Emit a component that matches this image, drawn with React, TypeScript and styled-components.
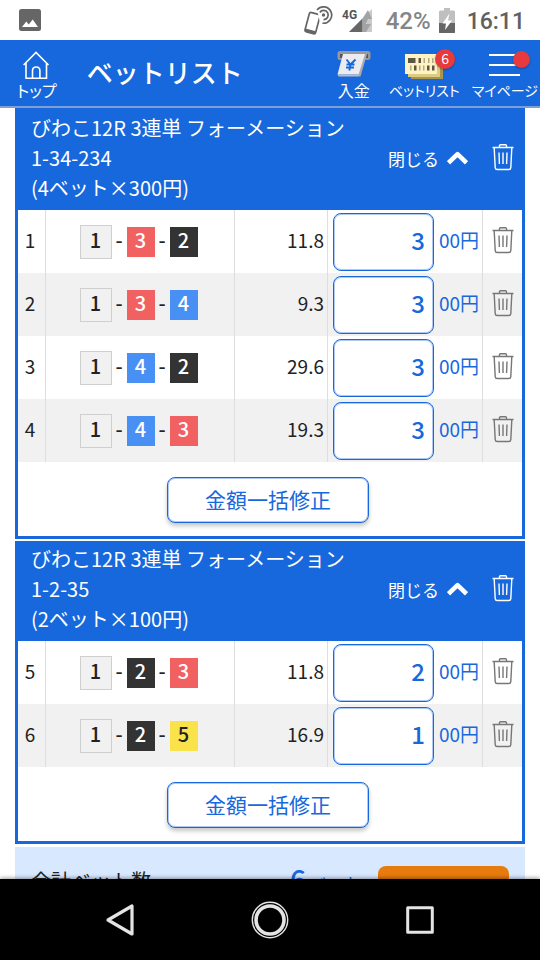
import React from "react";
import styled, { createGlobalStyle } from "styled-components";

const BLUE = "#1768dc";

const GlobalStyle = createGlobalStyle`
  * { box-sizing: border-box; }
  body {
    margin: 0;
    background: #fff;
    color: #222;
    font-family: "Noto Sans CJK JP", "Noto Sans", sans-serif;
    font-size: 20px;
  }
  button, input { font: inherit; color: inherit; margin: 0; }
  button { background: none; border: 0; padding: 0; cursor: pointer; }
  svg { display: block; }
`;

const Screen = styled.div`
  height: 100vh;
  display: flex;
  flex-direction: column;
  overflow: hidden;
`;

const StatusBar = styled.div`
  flex: none;
  height: 40px;
  padding: 0 15px 0 19px;
  display: flex;
  align-items: center;
  font-family: Roboto, sans-serif;
  font-size: 24px;
  font-weight: 500;
`;

const StatusGroup = styled.div`
  margin-left: auto;
  display: flex;
  align-items: center;
  gap: 8px;
`;

const Battery = styled.span`
  margin: 2px 0 0 4px;
  color: #858585;
`;

const Clock = styled.span`
  margin: 2px 0 0 4px;
  color: #606060;
  font-size: 23px;
`;

const Header = styled.header`
  flex: none;
  height: 68px;
  padding: 10px 2px 0 17px;
  display: flex;
  align-items: flex-start;
  background: ${BLUE};
  color: #fff;
  border-bottom: 2px solid #7d9fd3;
`;

const Title = styled.h1`
  margin: 0 auto 0 30px;
  font-size: 26px;
  line-height: 44px;
  font-weight: 500;
`;

const NavLink = styled.a<{ $gap?: number; $compact?: boolean }>`
  display: flex;
  flex-direction: column;
  align-items: center;
  margin-left: ${(p) => p.$gap ?? 0}px;
  color: #fff;
  text-decoration: none;
  white-space: nowrap;
  font-size: ${(p) => (p.$compact ? 14 : 16)}px;
  line-height: 20px;
  font-feature-settings: "palt";
`;

const NavIcon = styled.span`
  position: relative;
  height: 30px;
`;

const Badge = styled.span<{ $small?: boolean }>`
  position: absolute;
  top: ${(p) => (p.$small ? 1 : -1)}px;
  right: ${(p) => (p.$small ? -9 : -12)}px;
  width: ${(p) => (p.$small ? 17 : 20)}px;
  height: ${(p) => (p.$small ? 17 : 20)}px;
  border-radius: 50%;
  background: #e8393c;
  box-shadow: 0 1px 2px rgba(0, 0, 0, 0.3);
  font-size: 14px;
  line-height: 18px;
  text-align: center;
`;

const Main = styled.main`
  flex: 1;
  min-height: 0;
  padding: 0 15px;
  overflow: hidden;
  display: flex;
  flex-direction: column;
  gap: 2px;
`;

const Card = styled.section`
  flex: none;
  border: 3px solid ${BLUE};
  border-top-width: 0;
  &:first-child { border-top-width: 2px; }
`;

const CardHead = styled.div`
  display: flex;
  align-items: center;
  padding: 3px 0 7px 13px;
  background: ${BLUE};
  color: #fff;
`;

const CardTitle = styled.h2`
  flex: 1;
  margin: 0;
  font-size: 20px;
  line-height: 30px;
  font-weight: 400;
`;

const TitleLine = styled.span`
  display: block;
  white-space: nowrap;
`;

const Toggle = styled.button`
  display: flex;
  align-items: center;
  gap: 8px;
  margin-right: 15px;
  font-size: 17px;
  white-space: nowrap;
`;

const TrashButton = styled.button`
  width: 39px;
  padding-bottom: 2px;
  display: flex;
  justify-content: center;
`;

const BetTable = styled.table`
  width: 100%;
  table-layout: fixed;
  border-collapse: separate;
  border-spacing: 0;
`;

const Col = styled.col<{ $w?: number }>`
  width: ${(p) => (p.$w ? p.$w + "px" : "auto")};
`;

const Row = styled.tr`
  height: 63px;
  &:nth-child(even) { background: #f1f1f1; }
`;

const Cell = styled.td<{ $align?: string }>`
  height: 63px;
  padding: 0 3px 0 0;
  text-align: ${(p) => p.$align ?? "center"};
  font-size: 19px;
  line-height: 30px;
  border-right: 1px solid #dedede;
  &:last-child { border-right: 0; padding: 0; }
`;

const Figure = styled.span`
  display: block;
  padding-bottom: 4px;
`;

const Combo = styled.div`
  display: flex;
  align-items: center;
  justify-content: center;
  font-size: 20px;
`;

const Dash = styled.span`
  width: 15px;
  padding-bottom: 4px;
  text-align: center;
  font-weight: 500;
`;

const tone: Record<number, string> = {
  1: "#f1f1f1",
  2: "#333333",
  3: "#f16161",
  4: "#4990f5",
  5: "#fae24a",
};

const Boat = styled.span<{ $n: number }>`
  width: ${(p) => (p.$n === 1 ? 32 : 28)}px;
  height: ${(p) => (p.$n === 1 ? 34 : 30)}px;
  display: flex;
  align-items: center;
  justify-content: center;
  padding-bottom: 3px;
  background: ${(p) => tone[p.$n]};
  border: ${(p) => (p.$n === 1 ? "1px solid #cfcfcf" : "0")};
  color: ${(p) => (p.$n === 1 || p.$n === 5 ? "#222" : "#fff")};
  font-weight: 500;
`;

const Amount = styled.label`
  display: flex;
  align-items: center;
  gap: 5px;
  padding-left: 5px;
  color: ${BLUE};
  white-space: nowrap;
`;

const AmountInput = styled.input`
  width: 101px;
  height: 58px;
  padding: 0 8px 5px;
  border: 1px solid ${BLUE};
  border-radius: 8px;
  background: #fff;
  box-shadow: inset 0 0 0 1px rgba(23, 104, 220, 0.35);
  font-size: 24px;
  font-weight: 500;
  text-align: right;
`;

const CardFoot = styled.div`
  display: flex;
  justify-content: center;
  padding: 15px 4px 13px 0;
`;

const EditButton = styled.button`
  width: 202px;
  height: 46px;
  padding-bottom: 3px;
  border: 1px solid ${BLUE};
  border-radius: 8px;
  background: #fff;
  box-shadow: inset 0 0 0 1px rgba(23, 104, 220, 0.35), 0 3px 4px rgba(0, 0, 0, 0.22);
  color: ${BLUE};
  font-size: 21px;
  white-space: nowrap;
`;

const Summary = styled.section`
  flex: none;
  height: 120px;
  display: flex;
  align-items: flex-start;
  margin-top: 1px;
  padding: 19px 16px;
  background: #d8e8ff;
`;

const SummaryLabel = styled.span`
  flex: 1;
  line-height: 30px;
`;

const SummaryCount = styled.span`
  display: flex;
  align-items: baseline;
  gap: 4px;
  margin-right: 17px;
  color: ${BLUE};
  font-size: 17px;
  line-height: 24px;
`;

const Count = styled.b`
  font-size: 28px;
  font-weight: 500;
`;

const BuyButton = styled.button`
  width: 131px;
  height: 84px;
  border-radius: 8px;
  background: #e87b0e;
`;

const SystemBar = styled.nav`
  position: relative;
  flex: none;
  height: 81px;
  padding: 0 45px;
  display: flex;
  align-items: center;
  background: #000;
  box-shadow: 0 -1px 4px rgba(0, 0, 0, 0.4);
`;

const SystemButton = styled.button`
  flex: 1;
  display: flex;
  justify-content: center;
`;

const Trash = ({ color }: { color: string }) => (
  <svg width="22" height="27" viewBox="0 0 22 27" fill="none" stroke={color} strokeWidth="1.4" aria-hidden="true">
    <path d="M0.500 3.500h21M7.500 3V1.700c0-.6.4-1 1-1h5c.6 0 1 .4 1 1V3M2.200 4l1 19.600c.1 1.300.8 1.900 2 1.900h11.600c1.200 0 1.900-.6 2-1.900l1-19.600M7 8.500l.4 11.500M11 8.500v11.500M15 8.500l-.4 11.500" />
  </svg>
);

const Chevron = () => (
  <svg width="21" height="14" viewBox="0 0 21 14" fill="none" stroke="#fff" strokeWidth="4.500" strokeLinejoin="round" aria-hidden="true">
    <path d="M1.500 11.800L10.500 3.200l9 8.600" />
  </svg>
);

const PictureIcon = () => (
  <svg width="22" height="22" viewBox="0 0 22 22" aria-hidden="true">
    <rect width="22" height="22" rx="2.500" fill="#666" />
    <path d="M3 18l4.300-5.500 2.400 3 4-5L19 18z" fill="#fff" />
  </svg>
);

const PhoneIcon = () => (
  <svg width="30" height="30" viewBox="0 0 30 30" fill="none" stroke="#666" aria-hidden="true">
    <g transform="rotate(15 8 18)">
      <rect x="3" y="8" width="11" height="20" rx="2" strokeWidth="1.700" />
      <path d="M3 25h11v3H3z" fill="#666" stroke="none" />
    </g>
    <path d="M13 4.500l6 1 1 11-4 1z" fill="#fff" stroke="none" />
    <circle cx="19.500" cy="10" r="1.700" fill="#666" stroke="none" />
    <path d="M15.800 7.400a4.600 4.600 0 1 1 3.700 7.200M13 5a8.200 8.200 0 1 1 5.500 13.200" strokeWidth="1.700" />
  </svg>
);

const SignalIcon = () => (
  <svg width="32" height="28" viewBox="0 0 32 28" aria-hidden="true">
    <path d="M7 26L30 3v23z" fill="#cacaca" />
    <path d="M7 26L20.500 12.500V26z" fill="#666" />
    <path d="M20.500 12.500L26 4l4 9h-4l-2.500 5H29l-5 8h-3.500z" fill="#a3a3a3" />
    <text x="0" y="13" fontFamily="Roboto, sans-serif" fontSize="12" fontWeight="700" fill="#555">4G</text>
  </svg>
);

const BatteryIcon = () => (
  <svg width="16" height="25" viewBox="0 0 16 25" aria-hidden="true">
    <path d="M5 0h6v2.500h3.500c.8 0 1.500.6 1.500 1.500v20c0 .6-.4 1-1 1H1c-.6 0-1-.4-1-1V4c0-.9.6-1.500 1.500-1.500H5z" fill="#bfbfbf" />
    <path d="M0 15h16v9c0 .6-.4 1-1 1H1c-.6 0-1-.4-1-1z" fill="#666" />
    <path d="M10.500 5.500l-7 10H7l-1 6.500 7-9.500H9z" fill="#fff" />
  </svg>
);

const HouseIcon = () => (
  <svg width="28" height="30" viewBox="0 0 28 30" fill="none" stroke="#fff" strokeWidth="1.600" aria-hidden="true">
    <path d="M0.600 15L13 2.500 25.500 15M3 12.800V28.300h20.500V12.800M9.500 28.300v-7.600c0-5 7.400-5 7.400 0v7.600" />
  </svg>
);

const DepositIcon = () => (
  <svg width="34" height="30" viewBox="0 0 34 30" aria-hidden="true">
    <rect x="0.500" y="1" width="33" height="9" rx="2.500" fill="#98989a" />
    <rect x="3" y="4" width="28" height="4" fill="#56565a" />
    <path d="M26 4h4l-6.500 22.500h-3z" fill="#aaaab0" />
    <path d="M6 4h22l-6.500 20.500H0.500z" fill="#ececf0" />
    <path d="M0.500 24.500h21l-.6 2H1.500z" fill="#bcbcc2" />
    <path d="M9.500 9.500l4 5 5-5M13.500 14.500l-1.200 6M9.500 14.500h8M9 17.500h8" fill="none" stroke={BLUE} strokeWidth="1.900" />
  </svg>
);

const TicketIcon = () => (
  <svg width="38" height="30" viewBox="0 0 38 30" aria-hidden="true">
    <path d="M6 10h32v19H6z" fill="#a9954b" />
    <path d="M3 8h32v19H3z" fill="#dccb82" />
    <path d="M0 4h32v20H0z" fill="#fff3c3" />
    <path d="M3 8h7.500v5H3zM13.500 8H16v5h-2.500zM9 15.500h2.500v5H9zM22 15.500h2.500v5H22zM27 15.500h2.500v5H27z" fill="#5c5644" />
    <path d="M18.500 8H20v5h-1.500zM23 8h1.500v5H23zM27 8h1.500v5H27zM5 15.500h1.500v5H5zM14 15.500h1.500v5H14zM18 15.500h1.500v5H18z" fill="#b3a983" />
  </svg>
);

const MenuIcon = () => (
  <svg width="32" height="30" viewBox="0 0 32 30" fill="none" stroke="#fff" strokeWidth="2" aria-hidden="true">
    <path d="M0 5h30M0 15h30M0 25h31" />
  </svg>
);

interface Bet {
  no: number;
  boats: number[];
  odds: string;
  amount: number;
}

interface BetGroup {
  race: string;
  pick: string;
  total: string;
  bets: Bet[];
}

const groups: BetGroup[] = [
  {
    race: "びわこ12R 3連単 フォーメーション",
    pick: "1-34-234",
    total: "(4ベット×300円)",
    bets: [
      { no: 1, boats: [1, 3, 2], odds: "11.8", amount: 3 },
      { no: 2, boats: [1, 3, 4], odds: "9.3", amount: 3 },
      { no: 3, boats: [1, 4, 2], odds: "29.6", amount: 3 },
      { no: 4, boats: [1, 4, 3], odds: "19.3", amount: 3 },
    ],
  },
  {
    race: "びわこ12R 3連単 フォーメーション",
    pick: "1-2-35",
    total: "(2ベット×100円)",
    bets: [
      { no: 5, boats: [1, 2, 3], odds: "11.8", amount: 2 },
      { no: 6, boats: [1, 2, 5], odds: "16.9", amount: 1 },
    ],
  },
];

const BetCard = ({ group }: { group: BetGroup }) => (
  <Card>
    <CardHead>
      <CardTitle>
        <TitleLine>{group.race}</TitleLine>
        <TitleLine>{group.pick}</TitleLine>
        <TitleLine>{group.total}</TitleLine>
      </CardTitle>
      <Toggle type="button" aria-expanded="true">
        閉じる
        <Chevron />
      </Toggle>
      <TrashButton type="button" aria-label="すべて削除">
        <Trash color="#fff" />
      </TrashButton>
    </CardHead>
    <BetTable>
      <colgroup>
        <Col $w={28} />
        <Col />
        <Col $w={93} />
        <Col $w={155} />
        <Col $w={39} />
      </colgroup>
      <tbody>
        {group.bets.map((bet) => (
          <Row key={bet.no}>
            <Cell>
              <Figure>{bet.no}</Figure>
            </Cell>
            <Cell>
              <Combo>
                {bet.boats.map((n, i) => (
                  <React.Fragment key={n}>
                    {i > 0 && <Dash>-</Dash>}
                    <Boat $n={n}>{n}</Boat>
                  </React.Fragment>
                ))}
              </Combo>
            </Cell>
            <Cell $align="right">
              <Figure>{bet.odds}</Figure>
            </Cell>
            <Cell $align="left">
              <Amount>
                <AmountInput inputMode="numeric" defaultValue={bet.amount} />
                <Figure>00円</Figure>
              </Amount>
            </Cell>
            <Cell>
              <TrashButton type="button" aria-label="削除">
                <Trash color="#777" />
              </TrashButton>
            </Cell>
          </Row>
        ))}
      </tbody>
    </BetTable>
    <CardFoot>
      <EditButton type="button">金額一括修正</EditButton>
    </CardFoot>
  </Card>
);

export default function App() {
  return (
    <Screen>
      <GlobalStyle />
      <StatusBar>
        <PictureIcon />
        <StatusGroup>
          <PhoneIcon />
          <SignalIcon />
          <Battery>42%</Battery>
          <BatteryIcon />
          <Clock>16:11</Clock>
        </StatusGroup>
      </StatusBar>
      <Header>
        <NavLink href="#top">
          <NavIcon><HouseIcon /></NavIcon>
          トップ
        </NavLink>
        <Title>ベットリスト</Title>
        <NavLink href="#deposit">
          <NavIcon><DepositIcon /></NavIcon>
          入金
        </NavLink>
        <NavLink href="#bets" $gap={18} $compact>
          <NavIcon>
            <TicketIcon />
            <Badge>6</Badge>
          </NavIcon>
          ベットリスト
        </NavLink>
        <NavLink href="#mypage" $gap={12} $compact>
          <NavIcon>
            <MenuIcon />
            <Badge $small />
          </NavIcon>
          マイページ
        </NavLink>
      </Header>
      <Main>
        {groups.map((group) => (
          <BetCard key={group.pick} group={group} />
        ))}
        <Summary>
          <SummaryLabel>合計ベット数</SummaryLabel>
          <SummaryCount>
            <Count>6</Count>
            ベット
          </SummaryCount>
          <BuyButton type="button" aria-label="購入" />
        </Summary>
      </Main>
      <SystemBar>
        <SystemButton type="button" aria-label="戻る">
          <svg width="30" height="34" viewBox="0 0 30 34" fill="none" stroke="#e4e4e4" strokeWidth="3.200" strokeLinejoin="round">
            <path d="M27 3v28L3 17z" />
          </svg>
        </SystemButton>
        <SystemButton type="button" aria-label="ホーム">
          <svg width="38" height="38" viewBox="0 0 38 38" fill="none" stroke="#e4e4e4">
            <circle cx="19" cy="19" r="17.700" strokeWidth="1.400" />
            <circle cx="19" cy="19" r="14" strokeWidth="3.600" />
          </svg>
        </SystemButton>
        <SystemButton type="button" aria-label="履歴">
          <svg width="28" height="28" viewBox="0 0 28 28" fill="none" stroke="#e4e4e4" strokeWidth="3" strokeLinejoin="round">
            <path d="M1.700 1.700h24.600v24.600H1.700z" />
          </svg>
        </SystemButton>
      </SystemBar>
    </Screen>
  );
}
